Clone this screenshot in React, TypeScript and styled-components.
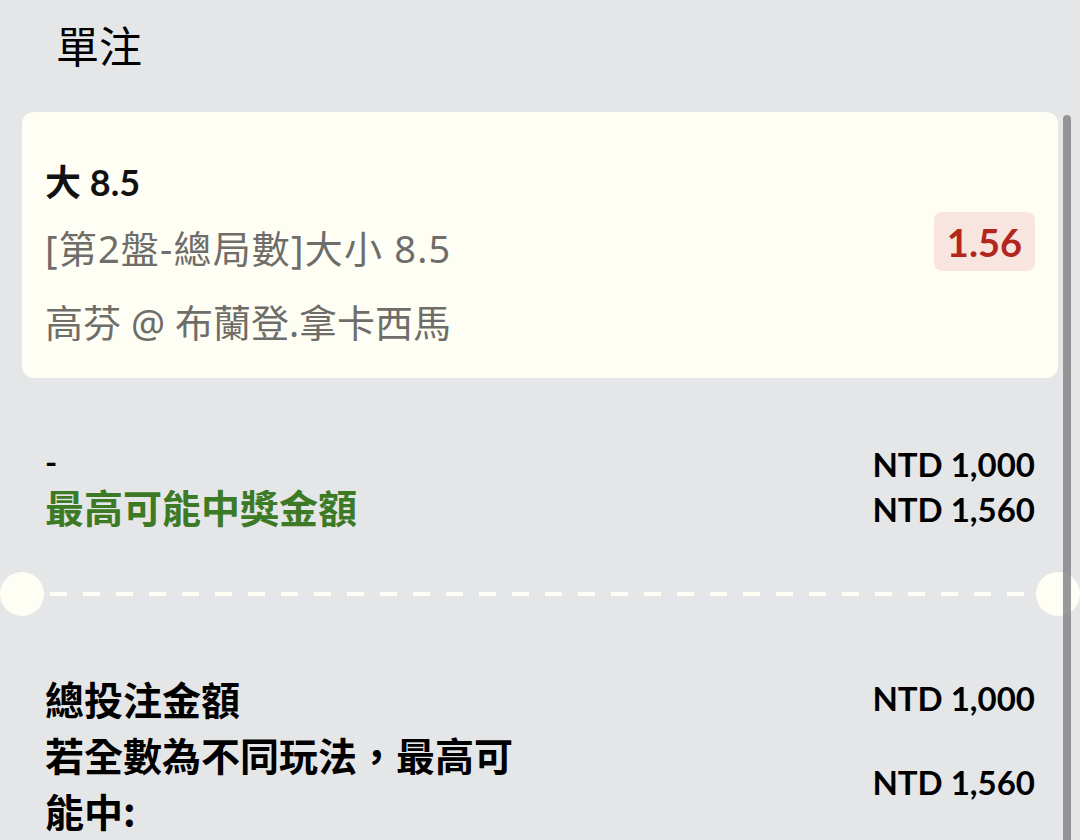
import React from "react";
import styled, { createGlobalStyle } from "styled-components";

const GlobalStyle = createGlobalStyle`
  html, body {
    margin: 0;
    padding: 0;
    background: #e5e6e8;
  }
  body {
    font-family: "Lato", "Noto Sans CJK TC", sans-serif;
  }
`;

const App: React.FC = () => {
    return (
        <Page>
            <GlobalStyle />
            <Title>單注</Title>

            <BetCard>
                <div className={"info"}>
                    <div className={"selection"}>大 8.5</div>
                    <div className={"market"}>[第2盤-總局數]大小 8.5</div>
                    <div className={"event"}>高芬 @ 布蘭登.拿卡西馬</div>
                </div>
                <Odds>1.56</Odds>
            </BetCard>

            <StakeBlock>
                <div className={"labels"}>
                    <span className={"dash"}>-</span>
                    <span className={"win"}>最高可能中獎金額</span>
                </div>
                <div className={"amounts"}>
                    <Amount>NTD 1,000</Amount>
                    <Amount>NTD 1,560</Amount>
                </div>
            </StakeBlock>

            <Divider />

            <Summary>
                <SummaryRow>
                    <Label>總投注金額</Label>
                    <Amount>NTD 1,000</Amount>
                </SummaryRow>
                <SummaryRow>
                    <Label>若全數為不同玩法，最高可能中:</Label>
                    <Amount>NTD 1,560</Amount>
                </SummaryRow>
            </Summary>

            <ScrollThumb />
        </Page>
    )
}

export default App;

const Page = styled.div`
  position: relative;
  width: 1080px;
  height: 840px;
  overflow: hidden;
  background: #e5e6e8;
  color: #000;
`;

const Title = styled.h1`
  margin: 0;
  padding: 16px 0 0 56px;
  height: 94px;
  box-sizing: border-box;
  font-family: "Noto Sans CJK TC", sans-serif;
  font-size: 43px;
  font-weight: 400;
  line-height: 56px;
`;

const BetCard = styled.div`
  margin: 18px 22px 0;
  height: 266px;
  box-sizing: border-box;
  padding: 42px 23px 0;
  background: #fffef5;
  border-radius: 12px;
  display: flex;
  justify-content: space-between;
  align-items: flex-start;

  .info {
    display: flex;
    flex-direction: column;
  }

  .selection {
    font-size: 36px;
    font-weight: 700;
    line-height: 56px;
    color: #111;
  }

  .market, .event {
    font-family: "Noto Sans", "Noto Sans CJK TC", sans-serif;
    font-size: 38px;
    line-height: 72px;
    color: #6e6d69;
  }

  .market {
    line-height: 76px;
    letter-spacing: 1.2px;
  }
`;

const Odds = styled.div`
  margin-top: 58px;
  padding: 0 13px;
  height: 59px;
  display: flex;
  align-items: center;
  background: #f8e5df;
  border-radius: 8px;
  color: #b3261e;
  font-size: 38px;
  font-weight: 700;
`;

const StakeBlock = styled.div`
  margin-top: 64px;
  padding: 0 45px;
  display: flex;
  justify-content: space-between;
  align-items: flex-start;

  .labels {
    display: flex;
    flex-direction: column;
    padding-top: 4px;
  }

  .dash {
    font-size: 33px;
    font-weight: 700;
    line-height: 30px;
    height: 30px;
  }

  .win {
    font-family: "Noto Sans CJK TC", sans-serif;
    font-size: 39px;
    font-weight: 700;
    line-height: 52px;
    color: #3d7a26;
    margin-top: 4px;
  }

  .amounts {
    display: flex;
    flex-direction: column;
    align-items: flex-end;
  }
`;

const Amount = styled.div`
  font-size: 33px;
  font-weight: 700;
  line-height: 45px;
  white-space: nowrap;
`;

const Divider = styled.div`
  position: relative;
  margin-top: 40px;
  height: 44px;

  &::before {
    content: "";
    position: absolute;
    left: 50px;
    right: 48px;
    top: 20px;
    height: 4px;
    background: repeating-linear-gradient(
      to right,
      #fffef5 0 17px,
      transparent 17px 33px
    );
  }

  &::after {
    content: "";
    position: absolute;
    left: 0;
    top: 0;
    width: 44px;
    height: 44px;
    border-radius: 50%;
    background: #fffef5;
    box-shadow: 1036px 0 0 #fffef5;
  }
`;

const Summary = styled.div`
  margin-top: 54px;
  padding: 0 45px;
  display: flex;
  flex-direction: column;
`;

const SummaryRow = styled.div`
  display: flex;
  justify-content: space-between;
  align-items: center;
`;

const Label = styled.div`
  max-width: 490px;
  font-family: "Noto Sans CJK TC", sans-serif;
  font-size: 39px;
  font-weight: 700;
  line-height: 56px;
`;

const ScrollThumb = styled.div`
  position: absolute;
  top: 115px;
  right: 9px;
  width: 8px;
  height: 760px;
  border-radius: 4px;
  background: rgba(128, 128, 130, 0.8);
`;
